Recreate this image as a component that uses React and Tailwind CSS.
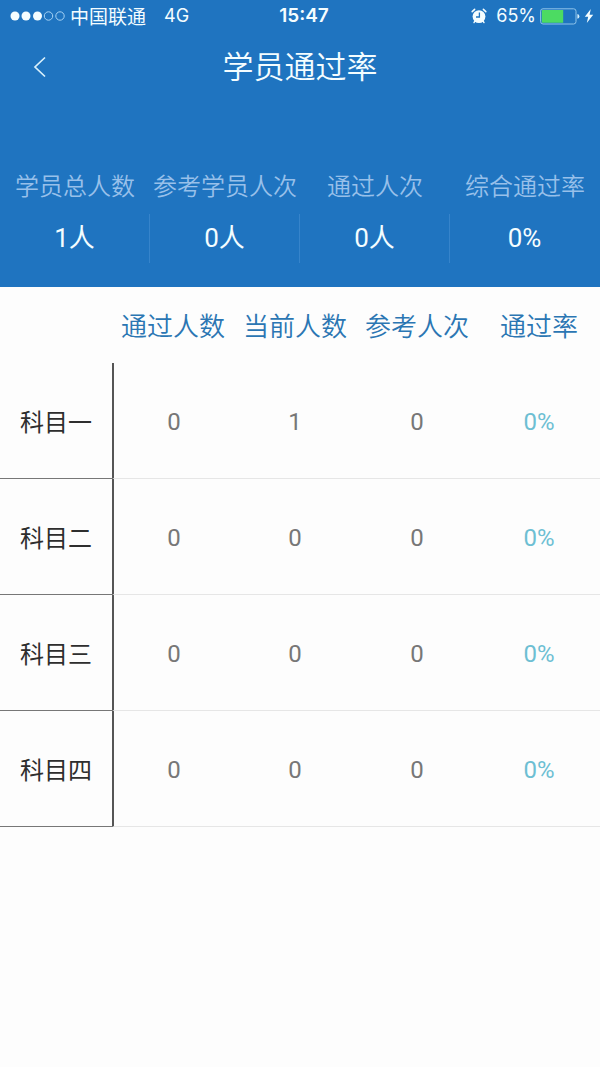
const stats = [
    { label: "学员总人数", value: "1人" },
    { label: "参考学员人次", value: "0人" },
    { label: "通过人次", value: "0人" },
    { label: "综合通过率", value: "0%" },
];

const columns = ["通过人数", "当前人数", "参考人次", "通过率"];

const subjects = [
    { name: "科目一", passed: 0, current: 1, attempts: 0, rate: "0%" },
    { name: "科目二", passed: 0, current: 0, attempts: 0, rate: "0%" },
    { name: "科目三", passed: 0, current: 0, attempts: 0, rate: "0%" },
    { name: "科目四", passed: 0, current: 0, attempts: 0, rate: "0%" },
];

const SignalDots = () => (
    <svg width="56" height="12" viewBox="0 0 56 12" aria-hidden="true">
        <circle cx="5" cy="6" r="4.5" fill="#f4fdff" />
        <circle cx="16" cy="6" r="4.5" fill="#f4fdff" />
        <circle cx="27.5" cy="6" r="4.5" fill="#f4fdff" />
        <circle cx="38.5" cy="6" r="4.2" fill="none" stroke="#a5d2f5" />
        <circle cx="50" cy="6" r="4.2" fill="none" stroke="#a5d2f5" />
    </svg>
);

const AlarmIcon = () => (
    <svg width="16" height="16" viewBox="0 0 16 16" aria-hidden="true">
        <circle cx="8" cy="8.6" r="6.4" fill="#f4fdff" />
        <path d="M1.2 3.6 L3.6 1.4 M14.8 3.6 L12.4 1.4" stroke="#f4fdff" strokeWidth="1.6" strokeLinecap="round" />
        <path d="M3.8 13.2 L3 14.6 M12.2 13.2 L13 14.6" stroke="#f4fdff" strokeWidth="1.4" strokeLinecap="round" />
        <path d="M8.4 4.6 V9 H5" fill="none" stroke="#1f74c0" strokeWidth="1.3" />
    </svg>
);

const BatteryIcon = () => (
    <svg width="40" height="17" viewBox="0 0 40 17" aria-hidden="true">
        <rect x="0.6" y="0.8" width="35.4" height="15.2" rx="2.4" fill="none" stroke="#8fc4ea" />
        <path d="M2.5 2 H23.2 V14.8 H2.5 Q1.8 14.8 1.8 14 V2.8 Q1.8 2 2.5 2 Z" fill="#4cdb62" />
        <path d="M37.4 6 Q39.4 6.4 39.4 8.4 Q39.4 10.4 37.4 10.8 Z" fill="#d5effb" />
    </svg>
);

const StatusBar = () => (
    <div className="grid h-8 grid-cols-3 items-center pl-[10px] pr-[6px] font-[Inter,'Noto_Sans_CJK_SC',sans-serif] leading-7">
        <div className="flex items-center whitespace-nowrap text-[19px]">
            <SignalDots />
            <span className="ml-1 pt-[3px]">中国联通</span>
            <span className="ml-[18px] text-lg">4G</span>
        </div>
        <div className="pl-1 text-center text-[19px] font-semibold">15:47</div>
        <div className="flex items-center justify-end">
            <AlarmIcon />
            <span className="ml-[9px] mr-1 text-lg">65%</span>
            <BatteryIcon />
            <svg className="ml-1" width="10" height="16" viewBox="0 0 10 16" aria-hidden="true">
                <path d="M6.8 1 L0.8 8.8 H4.2 L2.8 15 L9.2 6.8 H5.6 Z" fill="#f4fdff" />
            </svg>
        </div>
    </div>
);

const App = () => {
    return (
        <div className="min-h-screen bg-[#fdfdfd] font-[Roboto,'Noto_Sans_CJK_SC',sans-serif]">
            <header className="bg-[#1f74c0] pb-6 text-[#f4fdff]">
                <StatusBar />

                {/* Title bar */}
                <div className="grid h-[70px] grid-cols-[80px_1fr_80px] items-center">
                    <button type="button" aria-label="返回" className="flex h-full cursor-pointer items-center pl-[33px]">
                        <svg width="14" height="22" viewBox="0 0 14 22" aria-hidden="true">
                            <path d="M12 1.5 L2 11 L12 20.5" fill="none" stroke="#d9f0fb" strokeWidth="1.7" />
                        </svg>
                    </button>
                    <h1 className="pt-[2px] text-center text-[31px] font-[350] leading-10">学员通过率</h1>
                </div>

                {/* Summary */}
                <dl className="grid grid-cols-4 pt-[67px] text-center">
                    {stats.map((stat) => (
                        <div key={stat.label} className="group">
                            <dt className="whitespace-nowrap text-2xl font-[350] leading-9 text-[#98c0ea]">{stat.label}</dt>
                            <dd className="mt-[9px] h-[49px] border-r border-[#3684cb] text-[26px] leading-[48px] group-last:border-transparent">
                                {stat.value}
                            </dd>
                        </div>
                    ))}
                </dl>
            </header>

            {/* Subjects */}
            <table className="w-full table-fixed border-separate border-spacing-0 text-center">
                <thead>
                    <tr className="h-[76px] text-[26px] text-[#2b76b3]">
                        <td className="w-[112px]"></td>
                        {columns.map((column) => (
                            <th key={column} scope="col" className="whitespace-nowrap pt-1 font-[350]">
                                {column}
                            </th>
                        ))}
                    </tr>
                </thead>
                <tbody>
                    {subjects.map((subject) => (
                        <tr key={subject.name} className="h-[116px] text-2xl text-[#777777]">
                            <th scope="row" className="border-b border-[#777777] pt-1 font-normal text-[#2e2e2e]">
                                {subject.name}
                            </th>
                            <td className="border-b border-l-2 border-b-[#e6e6e6] border-l-[#555555] pt-[2px]">{subject.passed}</td>
                            <td className="border-b border-[#e6e6e6] pt-[2px]">{subject.current}</td>
                            <td className="border-b border-[#e6e6e6] pt-[2px]">{subject.attempts}</td>
                            <td className="border-b border-[#e6e6e6] pt-[2px] text-[#6dbfd3]">{subject.rate}</td>
                        </tr>
                    ))}
                </tbody>
            </table>
        </div>
    );
};

export default App;
